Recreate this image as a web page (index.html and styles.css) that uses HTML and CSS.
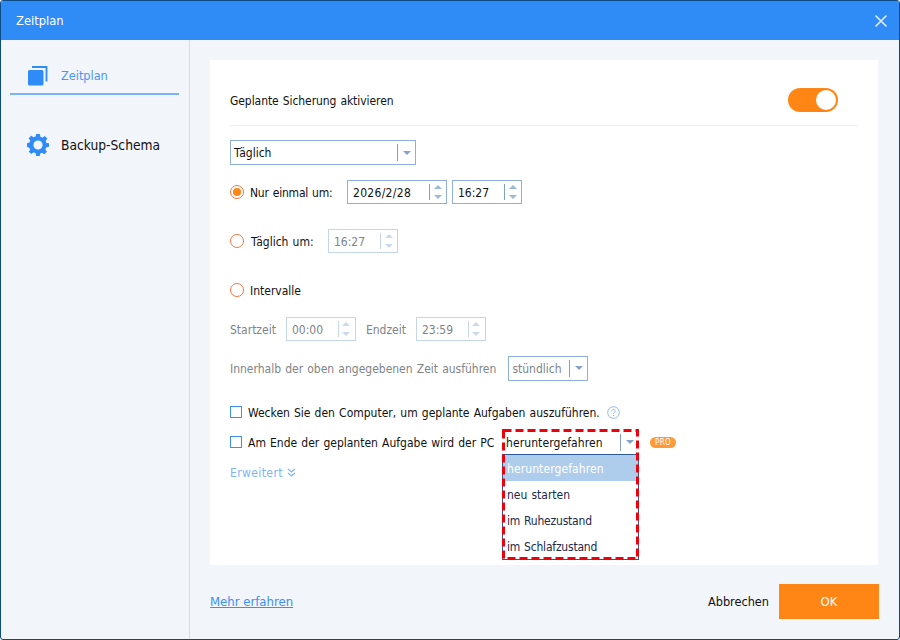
FILE: index.html
```html
<!DOCTYPE html>
<html lang="de">
<head>
<meta charset="utf-8">
<title>Zeitplan</title>
<link rel="stylesheet" href="styles.css">
</head>
<body>
<div class="window">
  <header class="titlebar">
    <span class="title">Zeitplan</span>
    <svg class="close" width="14" height="14" viewBox="0 0 14 14"><path d="M1.500 1.500 12.500 12.500M12.500 1.500 1.500 12.500" stroke="#dcebfd" stroke-width="1.700" fill="none"/></svg>
  </header>
  <div class="main">
    <aside class="sidebar">
      <div class="tab tab-active">
        <svg class="tab-icon" width="20" height="20" viewBox="0 0 20 20"><rect x="0" y="4" width="15.500" height="15.500" rx="1.500" fill="#2f8cf6"/><path d="M4 1H18.500V15.500" stroke="#2f8cf6" stroke-width="1.800" fill="none"/></svg>
        <span class="tab-label">Zeitplan</span>
      </div>
      <div class="tab">
        <svg class="tab-icon" width="22" height="22" viewBox="0 0 24 24"><path fill="#2f8cf6" fill-rule="evenodd" d="M10 0h4l.6 3.100c.8.200 1.500.5 2.200.9l2.600-1.800 2.800 2.800-1.800 2.600c.4.700.7 1.400.9 2.200L24 10v4l-3.100.6c-.2.800-.5 1.500-.9 2.200l1.800 2.600-2.800 2.800-2.600-1.800c-.7.400-1.400.7-2.200.9L14 24h-4l-.6-3.100c-.8-.2-1.500-.5-2.200-.9l-2.600 1.800-2.800-2.800L3.600 17.400c-.4-.7-.7-1.400-.9-2.200L0 14v-4l2.700-.6c.2-.8.500-1.500.9-2.200L1.800 4.600l2.800-2.800 2.600 1.800c.7-.4 1.400-.7 2.200-.9L10 0zm2 7a5 5 0 1 0 0 10 5 5 0 0 0 0-10z"/></svg>
        <span>Backup-Schema</span>
      </div>
    </aside>
    <section class="content">
      <div class="panel">
        <div class="toggle-row">
          <span class="t toggle-label">Geplante Sicherung aktivieren</span>
          <span class="toggle"><span class="knob"></span></span>
        </div>
        <div class="select select-freq"><span class="select-text">Täglich</span><span class="select-btn"><i class="caret"></i></span></div>

        <div class="row row-once">
          <span class="radio radio-on"></span>
          <span class="t label-once">Nur einmal um:</span>
          <span class="spin spin-date"><span class="spin-text wide">2026/2/28</span><span class="spin-btn"><i class="up"></i><i class="down"></i></span></span>
          <span class="spin spin-time"><span class="spin-text">16:27</span><span class="spin-btn"><i class="up"></i><i class="down"></i></span></span>
        </div>
        <div class="row row-daily">
          <span class="radio"></span>
          <span class="t label-daily">Täglich um:</span>
          <span class="spin spin-time off"><span class="spin-text">16:27</span><span class="spin-btn"><i class="up"></i><i class="down"></i></span></span>
        </div>
        <div class="row row-interval">
          <span class="radio"></span>
          <span class="t">Intervalle</span>
        </div>
        <div class="row row-range muted">
          <span class="t">Startzeit</span>
          <span class="spin spin-time off"><span class="spin-text">00:00</span><span class="spin-btn"><i class="up"></i><i class="down"></i></span></span>
          <span class="t">Endzeit</span>
          <span class="spin spin-time off"><span class="spin-text">23:59</span><span class="spin-btn"><i class="up"></i><i class="down"></i></span></span>
        </div>
        <div class="row row-within muted">
          <span class="t">Innerhalb der oben angegebenen Zeit ausführen</span>
          <span class="select select-hour"><span class="select-text">stündlich</span><span class="select-btn"><i class="caret"></i></span></span>
        </div>
        <div class="row row-wake">
          <span class="check"></span>
          <span class="t">Wecken Sie den Computer, um geplante Aufgaben auszuführen.</span>
          <svg class="help" width="13" height="13" viewBox="0 0 13 13"><circle cx="6.500" cy="6.500" r="5.800" fill="none" stroke="#8db8ec" stroke-width="1"/><path d="M4.800 5.200a1.700 1.700 0 1 1 2.600 1.400c-.6.400-.9.700-.9 1.300" fill="none" stroke="#8db8ec" stroke-width="1"/><rect x="6" y="9" width="1" height="1" fill="#8db8ec"/></svg>
        </div>
        <div class="row row-end">
          <span class="check"></span>
          <span class="t end-label">Am Ende der geplanten Aufgabe wird der PC</span>
          <div class="combo">
            <div class="combo-head"><span class="select-text">heruntergefahren</span><span class="select-btn"><i class="caret"></i></span></div>
            <ul class="menu">
              <li class="menu-item menu-sel">heruntergefahren</li>
              <li class="menu-item">neu starten</li>
              <li class="menu-item menu-narrow">im Ruhezustand</li>
              <li class="menu-item menu-narrow">im Schlafzustand</li>
            </ul>
            <svg class="dash" width="137" height="131" viewBox="0 0 137 131"><rect x="1.500" y="1.500" width="134" height="128" fill="none" stroke="#f00008" stroke-width="3" stroke-dasharray="8 4"/></svg>
          </div>
          <span class="pro">PRO</span>
        </div>
        <div class="row row-more">
          <span class="t more-text">Erweitert</span>
          <svg width="9" height="9" viewBox="0 0 9 9"><path d="M1 1 4.500 4 8 1M1 5 4.500 8 8 5" fill="none" stroke="#7db4f8" stroke-width="1.200"/></svg>
        </div>
      </div>
      <footer class="footer">
        <a class="more-link" href="#">Mehr erfahren</a>
        <div class="actions">
          <span class="cancel">Abbrechen</span>
          <span class="ok">OK</span>
        </div>
      </footer>
    </section>
  </div>
</div>
</body>
</html>
```

FILE: styles.css
```css
* { box-sizing: border-box; }
html, body { margin: 0; padding: 0; }
body {
  width: 900px;
  height: 640px;
  overflow: hidden;
  background: #fff;
  font-family: "DejaVu Sans Condensed", "DejaVu Sans", sans-serif;
  font-size: 12px;
  word-spacing: 0.7px;
  color: #111;
}
.t { padding-top: 2px; }
.window {
  width: 900px;
  height: 640px;
  display: flex;
  flex-direction: column;
  background: #f2f5fa;
  border: 1px solid #0c4a85;
  border-radius: 3px;
  overflow: hidden;
}
.titlebar {
  height: 39px;
  flex: none;
  background: #2f8cf6;
  color: #fff;
  display: flex;
  align-items: center;
  justify-content: space-between;
  padding: 0 11px 0 15px;
  font-size: 12.800px;
}
.main { flex: 1; display: flex; min-height: 0; }
.sidebar {
  width: 189px;
  flex: none;
  border-right: 1px solid #d8dce2;
  padding: 0 10px 0 9px;
  font-size: 13.700px;
}
.tab {
  height: 70px;
  padding: 0 0 0 17px;
  display: flex;
  align-items: center;
  gap: 12px;
}
.tab-active {
  height: 55px;
  padding-left: 18px;
  padding-top: 19px;
  gap: 13px;
  color: #4a97f8;
  border-bottom: 2px solid #7ab3fb;
  font-size: 12.600px;
  margin-bottom: 15px;
}
.tab-label { padding-bottom: 2px; }
.tab-icon { flex: none; }
.content {
  flex: 1;
  min-width: 0;
  display: flex;
  flex-direction: column;
  padding: 20px 20px 0 20px;
}
.panel {
  height: 505px;
  flex: none;
  background: #fff;
  padding: 0 20px;
  width: 668px;
}
.toggle-row {
  height: 66px;
  display: flex;
  align-items: center;
  justify-content: space-between;
  border-bottom: 1px solid #f0f1f3;
  padding: 28px 20px 13px 0;
}
.toggle-label { letter-spacing: -0.070px; }
.wide { letter-spacing: 0.300px; }
.toggle {
  width: 50px;
  height: 24px;
  border-radius: 12px;
  background: #ff8615;
  display: flex;
  align-items: center;
  justify-content: flex-end;
  padding-right: 2px;
}
.knob { width: 20px; height: 20px; border-radius: 50%; background: #fff; }
.select {
  display: flex;
  align-items: center;
  height: 25px;
  border: 1px solid #8fb0dc;
  background: #fff;
}
.select-freq { width: 186px; margin-top: 14px; }
.select-hour { width: 80px; height: 25px; }
.select-text { flex: 1; min-width: 0; padding: 2px 0 0 3px; white-space: nowrap; }
.select-freq .select-text { padding-top: 0; }
.select-btn {
  width: 18px;
  height: 17px;
  flex: none;
  border-left: 1px solid #7f9fca;
  display: flex;
  align-items: center;
  justify-content: center;
}
.caret {
  display: block;
  width: 0;
  height: 0;
  border-left: 4px solid transparent;
  border-right: 4px solid transparent;
  border-top: 4px solid #84a3cc;
}
.row { display: flex; align-items: center; }
.row-once { height: 24px; margin-top: 15px; }
.row-daily { height: 24px; margin-top: 25px; }
.row-interval { height: 24px; margin-top: 25px; gap: 6px; }
.row-range { height: 24px; margin-top: 15px; gap: 10px; }
.row-within { height: 24px; margin-top: 15px; gap: 12px; }
.row-wake { height: 16px; margin-top: 24px; gap: 6px; }
.row-end { height: 16px; margin-top: 14px; gap: 6px; }
.row-more { height: 16px; margin-top: 14px; gap: 4px; color: #7db4f8; }
.more-text { letter-spacing: 0.400px; }
.muted { color: #808488; }
.radio {
  width: 14px;
  height: 14px;
  flex: none;
  border-radius: 50%;
  border: 1.500px solid #f07840;
  background: #fff;
  display: flex;
  align-items: center;
  justify-content: center;
}
.radio-on::after {
  content: "";
  display: block;
  width: 8px;
  height: 8px;
  border-radius: 50%;
  background: #ff8615;
}
.label-once { margin-left: 6px; width: 97px; flex: none; letter-spacing: -0.200px; }
.label-daily { margin-left: 7px; width: 77px; flex: none; }
.spin {
  display: flex;
  align-items: center;
  height: 24px;
  border: 1px solid #8fb0dc;
  background: #fff;
  flex: none;
}
.spin-date { width: 100px; margin-right: 5px; }
.spin-time { width: 70px; }
.spin-text { flex: 1; padding: 2px 0 0 5px; white-space: nowrap; }
.spin-btn {
  width: 17px;
  height: 16px;
  flex: none;
  padding-right: 1px;
  border-left: 1px solid #7f9fca;
  display: flex;
  flex-direction: column;
  align-items: center;
  justify-content: center;
  gap: 6px;
}
.up, .down {
  display: block;
  width: 0;
  height: 0;
  border-left: 4px solid transparent;
  border-right: 4px solid transparent;
}
.up { border-bottom: 4px solid #9db8da; }
.down { border-top: 4px solid #9db8da; }
.off { border-color: #c5d5ea; color: #808488; }
.off .spin-btn { border-left-color: #c5d5ea; }
.off .up { border-bottom-color: #ccd9ea; }
.off .down { border-top-color: #ccd9ea; }
.check {
  width: 12px;
  height: 12px;
  flex: none;
  border: 1px solid #3f8fee;
  background: #fff;
}
.help { margin-left: 1px; flex: none; }
.end-label { width: 248px; flex: none; white-space: nowrap; }
.combo {
  width: 137px;
  height: 24px;
  flex: none;
  position: relative;
}
.combo-head {
  height: 24px;
  padding: 0 1px;
  display: flex;
  align-items: center;
  color: #111;
  letter-spacing: 0.100px;
}
.menu {
  position: absolute;
  left: 0;
  top: 24px;
  width: 137px;
  margin: 0;
  padding: 0;
  list-style: none;
  background: #fff;
  border: 1px solid #2b5a96;
  color: #1a2a4a;
}
.menu-item { height: 26px; line-height: 28px; padding-left: 4px; }
.menu-sel { background: #aecdec; color: #fff; letter-spacing: 0.100px; }
.menu-narrow { letter-spacing: -0.200px; }
.dash { position: absolute; left: 0; top: -1px; }
.pro {
  width: 26px;
  height: 11px;
  margin-left: 5px;
  border-radius: 6px;
  background: #ff9a3c;
  color: #fff;
  font-size: 8px;
  letter-spacing: 0.300px;
  line-height: 11px;
  text-align: center;
  flex: none;
}
.footer {
  flex: 1;
  display: flex;
  align-items: flex-start;
  justify-content: space-between;
  padding-top: 19px;
}
.more-link {
  margin-top: 10px;
  color: #3d8ff6;
  font-size: 13px;
  word-spacing: 0;
  text-decoration: underline;
}
.actions { display: flex; align-items: center; gap: 10px; }
.cancel { font-size: 12.600px; color: #111; }
.ok {
  width: 100px;
  height: 35px;
  display: flex;
  align-items: center;
  justify-content: center;
  background: #ff8615;
  color: #fff;
  font-size: 13px;
}
```
